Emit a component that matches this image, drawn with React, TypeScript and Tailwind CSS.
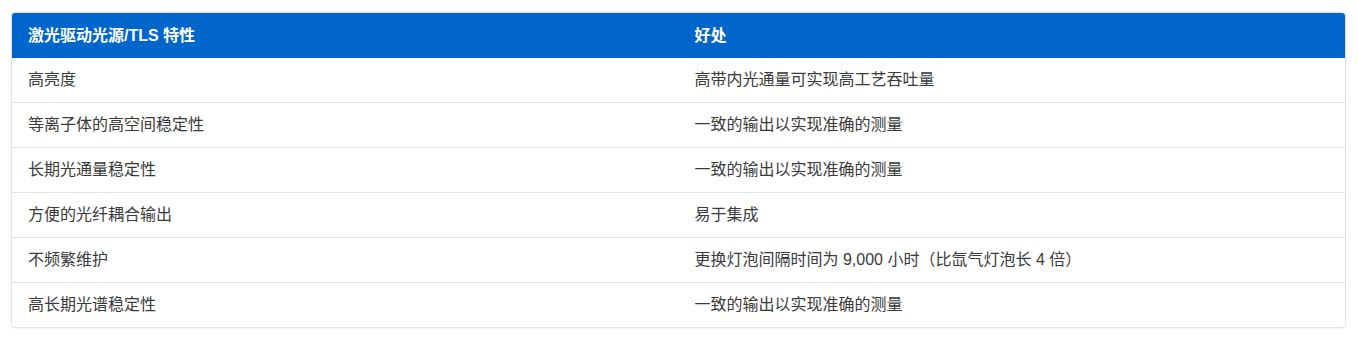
import React from "react";

const rows: [string, string][] = [
  ["高亮度", "高带内光通量可实现高工艺吞吐量"],
  ["等离子体的高空间稳定性", "一致的输出以实现准确的测量"],
  ["长期光通量稳定性", "一致的输出以实现准确的测量"],
  ["方便的光纤耦合输出", "易于集成"],
  ["不频繁维护", "更换灯泡间隔时间为 9,000 小时（比氙气灯泡长 4 倍）"],
  ["高长期光谱稳定性", "一致的输出以实现准确的测量"],
];

export default function App() {
  return (
    <div
      className="bg-white pl-[11px] pr-[12px] pt-[12px] pb-[11px]"
      style={{ fontFamily: '"Liberation Sans", "Noto Sans CJK SC", sans-serif' }}
    >
      <div className="rounded-[4px] border border-[#dee2e6] overflow-hidden shadow-[0_1px_2px_rgba(0,0,0,0.05)]">
        <div className="grid grid-cols-2 bg-[#0066cc] text-white text-[16px] font-bold leading-[21px]">
          <div className="px-4 py-[12px]">激光驱动光源/TLS 特性</div>
          <div className="px-4 py-[12px]">好处</div>
        </div>
        {rows.map(([a, b], i) => (
          <div
            key={i}
            className={`grid grid-cols-2 text-[16px] leading-[20px] text-[#3a3a3a] ${
              i < rows.length - 1 ? "border-b border-[#dee2e6]" : ""
            }`}
          >
            <div className="px-4 py-[12px]">{a}</div>
            <div className="px-4 py-[12px]">{b}</div>
          </div>
        ))}
      </div>
    </div>
  );
}
